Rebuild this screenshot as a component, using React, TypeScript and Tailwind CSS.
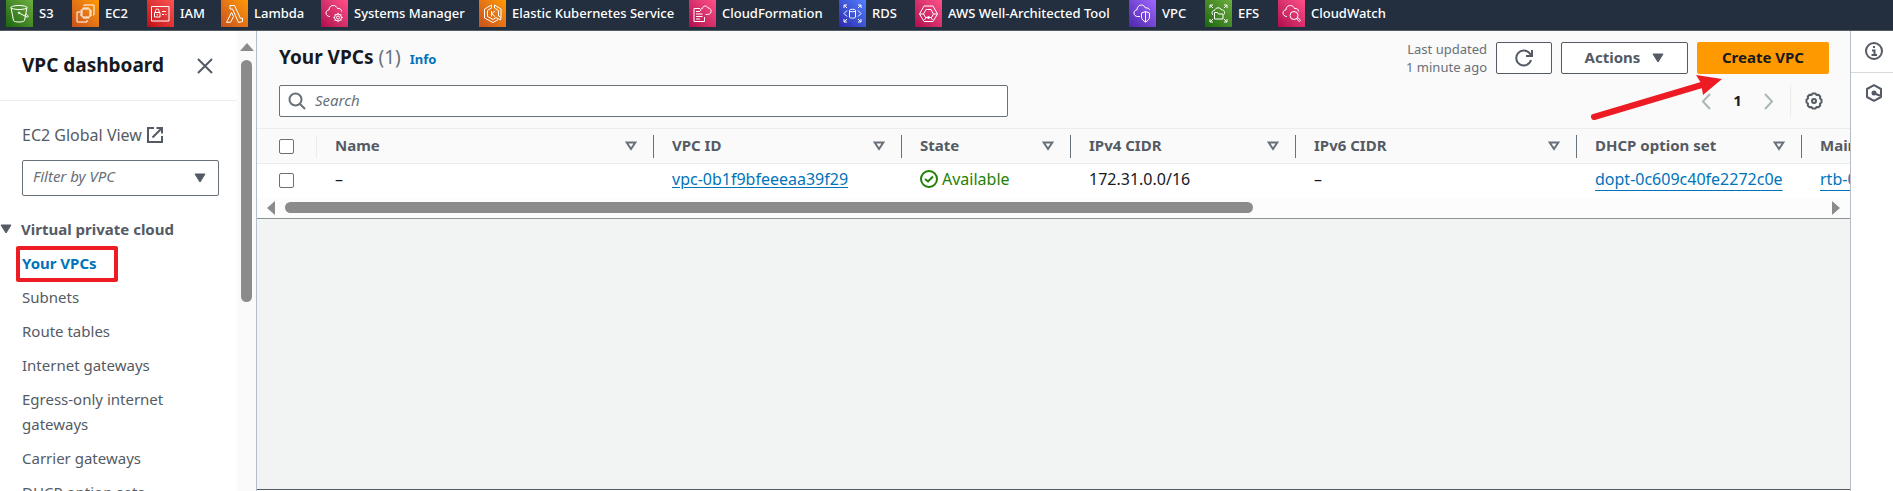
import React from "react";

type Service = { name: string; width: string; tile: string; glyph: React.ReactNode };

const cloud = "M9 16.5C6.500 16.500 5 15 5 13C5 11 6.500 10 8 9.800C8 7 10 5.500 12.300 5.500C14.500 5.500 15.800 6.800 16.500 8.500C19 8 20.500 9.500 20.700 11.500";

const services: Service[] = [
  {
    name: "S3",
    width: "w-[66px]",
    tile: "from-[#1b660f] to-[#6cae3e]",
    glyph: (
      <>
        <ellipse cx="13" cy="7.500" rx="8" ry="2" />
        <path d="M5 7.500L7.500 20.500C8 22.500 18 22.500 18.500 20.500L21 7.500" />
        <path d="M13 13L21 17C23 17.500 22.500 15.500 20 14" />
        <circle cx="13" cy="12.800" r="0.700" fill="white" />
      </>
    ),
  },
  {
    name: "EC2",
    width: "w-[75px]",
    tile: "from-[#c8511b] to-[#ff9900]",
    glyph: (
      <>
        <rect x="10" y="9" width="8" height="8" />
        <path d="M12 7V9M14 7V9M16 7V9M12 17V19M14 17V19M16 17V19M8 11H10M8 13H10M8 15H10M18 11H20M18 13H20M18 15H20" />
        <path d="M12 6V5H22V15H21M8 12H5V22H15V20" />
      </>
    ),
  },
  {
    name: "IAM",
    width: "w-[74px]",
    tile: "from-[#bd0816] to-[#ff5252]",
    glyph: (
      <>
        <rect x="4.500" y="6.500" width="17.500" height="14.500" />
        <rect x="7.500" y="12.500" width="5.500" height="4.500" />
        <path d="M8.500 12.500V10.500C8.500 8.500 12 8.500 12 10.500V12.500M10.300 14V15.500M15 11.500H19M15 14.500H17M18.500 14.500H19.500" />
      </>
    ),
  },
  {
    name: "Lambda",
    width: "w-[100px]",
    tile: "from-[#c8511b] to-[#ff9900]",
    glyph: <path d="M9 5.500H13.500L19.500 18.500L21.500 18V21.500L17.500 22.500L11.500 9H9ZM10.500 12.500L12.500 16.500L9.500 22.300H5.500Z" />,
  },
  {
    name: "Systems Manager",
    width: "w-[158px]",
    tile: "from-[#b0084d] to-[#ff4f8b]",
    glyph: (
      <>
        <path d={cloud} />
        <circle cx="17" cy="17.500" r="1.500" />
        <path d="M17 12.800V14.200M17 20.800V22.200M12.300 17.500H13.700M20.300 17.500H21.700M13.700 14.200L14.700 15.200M19.300 19.800L20.300 20.800M13.700 20.800L14.700 19.800M19.300 15.200L20.300 14.200" />
        <circle cx="17" cy="17.500" r="3.500" />
      </>
    ),
  },
  {
    name: "Elastic Kubernetes Service",
    width: "w-[210px]",
    tile: "from-[#c8511b] to-[#ff9900]",
    glyph: (
      <>
        <path d="M12.500 5L5.500 9V18L14 22.500L19 19.500M15.500 5L22 9V17.500" />
        <path d="M12.500 8L8.500 10.500V16.500L14 19.500L17 17.500L21.500 20L22 17.500L19.500 16V10.500L15.500 8M12.500 5V8M15.500 5V8" />
        <path d="M12.500 11V16.500M16 11L12.800 13.800L16 16.500" />
      </>
    ),
  },
  {
    name: "CloudFormation",
    width: "w-[150px]",
    tile: "from-[#b0084d] to-[#ff4f8b]",
    glyph: (
      <>
        <path d="M11 8.500H5V21.500H15.500V17M7 11.500H11M7 14H13.500M7 16.500H13.500M7 19H11" />
        <path d="M11.500 11C11.500 8.500 12.500 8.500 13.500 8.500C13.500 5.500 18 5 19 8C21.500 8 22.500 10 22 12C21.500 14 20 14.500 16.500 14.500" />
      </>
    ),
  },
  {
    name: "RDS",
    width: "w-[76px]",
    tile: "from-[#2e27ad] to-[#527fff]",
    glyph: (
      <>
        <ellipse cx="13.500" cy="10.500" rx="3" ry="1.300" />
        <path d="M10.500 10.500V17C10.500 18.500 16.500 18.500 16.500 17V10.500" />
        <path d="M8 10.500L5 13.500L8 16.500M19 10.500L22 13.500L19 16.500" />
        <path d="M8 8L5 5M5 8V5H8M19 8L22 5M19 5H22V8M8 19L5 22M5 19V22H8M19 19L22 22M22 19V22H19" />
      </>
    ),
  },
  {
    name: "AWS Well-Architected Tool",
    width: "w-[214px]",
    tile: "from-[#b0084d] to-[#ff4f8b]",
    glyph: (
      <>
        <path d="M9 6H18L22.500 14L18 21.500H9L4.500 14Z" />
        <path d="M11 9.500H16L18.500 14L16.500 17.500H10.500L8.500 14ZM4.500 14H8.500M18.500 14H22.500M11 17.500L9.500 20M16 17.500L17.500 20" />
        <circle cx="13.500" cy="17.500" r="1" fill="white" />
      </>
    ),
  },
  {
    name: "VPC",
    width: "w-[76px]",
    tile: "from-[#4d27aa] to-[#a166ff]",
    glyph: (
      <>
        <path d="M11 16.500H8.500C6.500 16.500 5 15 5 13C5 11 6.500 10 8 9.800C8 7 10 5 12.300 5C14.500 5 15.800 6.500 16.500 8C18.500 7.500 20.500 8.500 20.500 10" />
        <path d="M16.500 11.500L20.500 13V17C20.500 19 18.500 21 16.500 22C14.500 21 12.500 19 12.500 17V13ZM16.500 11.500V22" />
      </>
    ),
  },
  {
    name: "EFS",
    width: "w-[73px]",
    tile: "from-[#1b660f] to-[#6cae3e]",
    glyph: (
      <>
        <path d="M8 15C6 12.500 7.500 10.500 9.500 10.500C10.500 7 15.500 7 16.500 10C19 9.500 20.500 12 19 14.500" />
        <path d="M9.500 19V12.500H12.500L13.500 14H18V19Z" />
        <path d="M8 8L5 5M5 8V5H8M19 8L22 5M19 5H22V8M8 19L5 22M5 19V22H8M19 19L22 22M22 19V22H19" />
      </>
    ),
  },
  {
    name: "CloudWatch",
    width: "w-[130px]",
    tile: "from-[#b0084d] to-[#ff4f8b]",
    glyph: (
      <>
        <path d={cloud} />
        <circle cx="16" cy="15.500" r="4" />
        <path d="M18.500 18.500L20 17.500L22.500 20.500L21.300 21.700Z" />
      </>
    ),
  },
];

function ServiceBar() {
  return (
    <nav aria-label="Favorites" className="flex h-[31px] shrink-0 overflow-hidden border-b border-[#545b64] bg-[#232f3e] pl-[6px]">
      {services.map((s) => (
        <a key={s.name} href="#" className={`flex shrink-0 items-start gap-[6px] whitespace-nowrap ${s.width}`}>
          <span className={`size-[27px] shrink-0 bg-linear-to-tr ${s.tile}`}>
            <svg viewBox="0 0 27 27" className="size-full" fill="none" stroke="white" strokeWidth="1" strokeLinejoin="round" aria-hidden="true">
              {s.glyph}
            </svg>
          </span>
          <span className="text-[13px] font-medium leading-[26px] text-white">{s.name}</span>
        </a>
      ))}
    </nav>
  );
}

function Caret({ className = "" }: { className?: string }) {
  return (
    <svg viewBox="0 0 12 10" className={`h-[10px] w-[12px] shrink-0 ${className}`} aria-hidden="true">
      <path d="M1 1H11L6 9Z" fill="#545b64" stroke="#545b64" strokeLinejoin="round" />
    </svg>
  );
}

const links = ["Your VPCs", "Subnets", "Route tables", "Internet gateways", "Egress-only internet gateways", "Carrier gateways", "DHCP option sets"];

function Sidebar() {
  return (
    <aside className="flex w-[257px] shrink-0 overflow-hidden border-r border-[#b6bec9] bg-white">
      <div className="min-w-0 flex-1 text-[15px] text-[#545b64]">
        <div className="flex h-[70px] items-center justify-between border-b border-[#eaeded] pl-[22px] pr-[24px]">
          <h2 className="text-[19px] font-bold text-[#16191f]">VPC dashboard</h2>
          <button type="button" aria-label="Close navigation" className="size-4">
            <svg viewBox="0 0 16 16" className="size-4" stroke="#545b64" strokeWidth="2" aria-hidden="true">
              <path d="M1 1L15 15M15 1L1 15" />
            </svg>
          </button>
        </div>
        <a href="#" className="mt-[22px] flex h-6 items-center gap-[5px] pl-[22px] text-base">
          EC2 Global View
          <svg viewBox="0 0 16 16" className="size-4" fill="none" stroke="#545b64" strokeWidth="2" aria-hidden="true">
            <path d="M7 1H1V15H15V9M9.500 1H15V6.500M15 1L5.500 10.500" />
          </svg>
        </a>
        <div className="relative mt-[13px] ml-[22px] mr-[18px]">
          <select aria-label="Filter by VPC" className="h-9 w-full appearance-none rounded-[2px] border border-[#687078] bg-white pl-[10px] pb-[3px] text-[15px] italic text-[#687078]">
            <option>Filter by VPC</option>
          </select>
          <Caret className="pointer-events-none absolute right-[13px] top-[13px]" />
        </div>
        <button type="button" className="mt-[21px] flex h-6 items-center gap-[9px] font-bold">
          <Caret />
          Virtual private cloud
        </button>
        <ul className="mt-[10px] flex flex-col gap-[9px] pl-[22px] pr-[40px] leading-[25px]">
          {links.map((l, i) => (
            <li key={l} className="relative">
              <a href="#" className={i === 0 ? "font-bold text-[#0073bb]" : ""}>{l}</a>
              {i === 0 && <span className="pointer-events-none absolute -left-[6px] -top-[5px] h-9 w-[102px] rounded-[2px] border-4 border-[#ed1c24]" />}
            </li>
          ))}
        </ul>
      </div>
      <div className="flex w-[19px] shrink-0 flex-col items-center bg-[#fafafa] pt-[12px]" aria-hidden="true">
        <svg viewBox="0 0 14 8" className="h-2 w-[14px] shrink-0"><path d="M7 0L14 8H0Z" fill="#8b8b8b" /></svg>
        <div className="mt-[9px] h-[242px] w-[11px] shrink-0 rounded-full bg-[#8b8b8b]" />
      </div>
    </aside>
  );
}

function Box({ label }: { label: string }) {
  return <input type="checkbox" aria-label={label} className="block size-[15px] appearance-none rounded-[2px] border border-[#687078] bg-white" />;
}

const columns = [
  { name: "Name", width: "w-[337px]" },
  { name: "VPC ID", width: "w-[248px]" },
  { name: "State", width: "w-[169px]" },
  { name: "IPv4 CIDR", width: "w-[225px]" },
  { name: "IPv6 CIDR", width: "w-[281px]" },
  { name: "DHCP option set", width: "w-[225px]" },
  { name: "Main route table", width: "w-[225px]" },
];

const linkStyle = "text-[#0073bb] underline underline-offset-2";
const dottedLinkStyle = "text-[#0073bb] underline underline-offset-[5px]";

function VpcTable() {
  return (
    <div className="overflow-hidden">
      <table className="w-[1770px] table-fixed border-collapse text-left text-base leading-6 text-[#16191f]">
        <thead>
          <tr className="h-[35px] border-y border-[#eaeded] bg-[#fafafa] text-[15px] text-[#545b64]">
            <th className="w-[60px] p-0">
              <div className="flex h-[23px] items-center border-r border-[#eaeded] pl-[22px]"><Box label="Select all" /></div>
            </th>
            {columns.map((c) => (
              <th key={c.name} className={`p-0 ${c.width}`}>
                <div className="flex h-[23px] items-center justify-between whitespace-nowrap border-r border-[#687078] pl-[18px] pr-4 font-bold">
                  <span className="pb-[3px]">{c.name}</span>
                  <svg viewBox="0 0 12 10" className="h-[10px] w-[12px] shrink-0" fill="none" stroke="#687078" strokeWidth="2" aria-hidden="true">
                    <path d="M1.700 1.500H10.300L6 8Z" />
                  </svg>
                </div>
              </th>
            ))}
          </tr>
        </thead>
        <tbody>
          <tr className="h-[34px] bg-white [&>td]:whitespace-nowrap [&>td]:p-0 [&>td]:pl-[18px] [&>td]:pb-[3px]">
            <th className="p-0 pl-[22px]"><Box label="Select VPC" /></th>
            <td>–</td>
            <td><a href="#" className={linkStyle}>vpc-0b1f9bfeeeaa39f29</a></td>
            <td>
              <span className="flex items-center gap-[4px] text-[#1d8102]">
                <svg viewBox="0 0 18 18" className="size-[18px]" fill="none" stroke="#1d8102" strokeWidth="2" aria-hidden="true">
                  <circle cx="9" cy="9" r="8" /><path d="M5 9L8 11.500L13 6.500" />
                </svg>
                Available
              </span>
            </td>
            <td>172.31.0.0/16</td>
            <td>–</td>
            <td><a href="#" className={dottedLinkStyle}>dopt-0c609c40fe2272c0e</a></td>
            <td><a href="#" className={dottedLinkStyle}>rtb-0a7d2c41</a></td>
          </tr>
        </tbody>
      </table>
    </div>
  );
}

function Toolbar() {
  const button = "flex h-8 items-center justify-center rounded-[2px] border border-[#545b64] bg-white text-[15px] font-bold text-[#545b64]";
  return (
    <header className="relative h-[97px] pl-[22px] pr-[21px]">
      <div className="flex h-[54px] items-center">
        <h1 className="pb-[2px] text-[19px] font-bold text-[#16191f]">
          Your VPCs <span className="font-normal text-[#687078]">(1)</span>
        </h1>
        <a href="#" className="ml-[9px] pt-[3px] text-[13px] font-bold text-[#0073bb]">Info</a>
        <p className="ml-auto mr-[9px] text-right text-[13px] leading-[18px] text-[#687078]">Last updated<br />1 minute ago</p>
        <button type="button" aria-label="Refresh" className={`${button} w-14`}>
          <svg viewBox="0 0 18 18" className="size-[18px]" fill="none" stroke="#545b64" strokeWidth="2" aria-hidden="true">
            <path d="M16 11A7.500 7.500 0 1 1 14.800 4.500L17 7M17 1V7H11" />
          </svg>
        </button>
        <button type="button" className={`${button} ml-[9px] w-[127px] gap-[12px]`}><span className="pb-[2px]">Actions</span><Caret /></button>
        <button type="button" className="ml-[9px] h-8 w-[132px] rounded-[2px] bg-[#ff9900] pb-[2px] text-[15px] font-bold text-[#16191f]">Create VPC</button>
      </div>
      <div className="flex h-8 items-center">
        <label className="flex h-8 w-[729px] items-center gap-[9px] rounded-[2px] border border-[#687078] bg-white pl-2">
          <svg viewBox="0 0 18 18" className="size-[18px] shrink-0" fill="none" stroke="#687078" strokeWidth="2" aria-hidden="true">
            <circle cx="7.500" cy="7.500" r="6" /><path d="M12 12L17 17" />
          </svg>
          <input type="text" aria-label="Search" placeholder="Search" className="h-full min-w-0 flex-1 pb-[2px] text-[15px] italic outline-none placeholder:text-[#687078]" />
        </label>
        <div className="ml-auto flex h-8 items-center pr-[6px]">
          <button type="button" aria-label="Previous page">
            <svg viewBox="0 0 10 17" className="h-[17px] w-[10px]" fill="none" stroke="#aab7b8" strokeWidth="2" aria-hidden="true"><path d="M9 1L2 8.500L9 16" /></svg>
          </button>
          <span className="w-[53px] pb-[2px] text-center text-[15px] font-bold text-[#16191f]">1</span>
          <button type="button" aria-label="Next page">
            <svg viewBox="0 0 10 17" className="h-[17px] w-[10px]" fill="none" stroke="#aab7b8" strokeWidth="2" aria-hidden="true"><path d="M1 1L8 8.500L1 16" /></svg>
          </button>
          <button type="button" aria-label="Preferences" className="ml-[16px] flex h-8 items-center border-l border-[#eaeded] pl-[14px]">
            <svg viewBox="0 0 18 18" className="size-[18px]" fill="none" stroke="#545b64" strokeWidth="2" strokeLinejoin="round" aria-hidden="true">
              <path d="M7.500 1.500H10.500L11.500 3L13.500 2.800L15.200 4.500L15 6.500L16.500 7.500V10.500L15 11.500L15.200 13.500L13.500 15.200L11.500 15L10.500 16.500H7.500L6.500 15L4.500 15.200L2.800 13.500L3 11.500L1.500 10.500V7.500L3 6.500L2.800 4.500L4.500 2.800L6.500 3Z" />
              <circle cx="9" cy="9" r="2" />
            </svg>
          </button>
        </div>
      </div>
      <svg viewBox="0 0 134 48" className="pointer-events-none absolute right-[126px] top-[42px] h-12 w-[134px]" aria-hidden="true">
        <path d="M4 44L115 11" stroke="#ed1c24" strokeWidth="6" strokeLinecap="round" />
        <path d="M132 6L106 2L111 10L113 22Z" fill="#ed1c24" />
      </svg>
    </header>
  );
}

export default function App() {
  return (
    <div className="flex h-screen flex-col overflow-hidden font-['Noto_Sans',sans-serif]">
      <ServiceBar />
      <div className="flex min-h-0 flex-1">
        <Sidebar />
        <main className="flex min-w-0 flex-1 flex-col bg-[#f2f3f3]">
          <section className="border-b border-[#879596] bg-[#fafafa]">
            <Toolbar />
            <VpcTable />
            <div className="flex h-[20px] items-center bg-[#fcfcfc] px-[10px]" aria-hidden="true">
              <svg viewBox="0 0 8 14" className="h-[14px] w-2 shrink-0"><path d="M8 0V14L0 7Z" fill="#8b8b8b" /></svg>
              <div className="mx-[10px] flex-1"><div className="h-[11px] w-[63%] rounded-full bg-[#8b8b8b]" /></div>
              <svg viewBox="0 0 8 14" className="h-[14px] w-2 shrink-0"><path d="M0 0V14L8 7Z" fill="#8b8b8b" /></svg>
            </div>
          </section>
          <div className="mt-auto h-[2px] border-t border-[#545b64] bg-white" />
        </main>
        <aside className="w-[43px] shrink-0 border-l border-[#b6bec9] bg-white">
          <button type="button" aria-label="Info panel" className="flex h-[42px] w-full items-center justify-center border-b border-[#d5dbdb] pl-1 pb-[2px]">
            <svg viewBox="0 0 18 18" className="size-[18px]" fill="none" stroke="#545b64" strokeWidth="2" aria-hidden="true">
              <circle cx="9" cy="9" r="8" /><path d="M7 8.500H9.500V13M6.500 13H12M8 5H10" />
            </svg>
          </button>
          <button type="button" aria-label="Diagnostics" className="flex h-[42px] w-full items-center justify-center pl-1 pb-[2px]">
            <svg viewBox="0 0 18 18" className="size-[18px]" fill="none" stroke="#545b64" strokeWidth="2" strokeLinejoin="round" aria-hidden="true">
              <path d="M9 1.200L16 5V13L9 16.800L2 13V5ZM9.500 9.500L16 12" /><circle cx="9" cy="9" r="1.500" fill="#545b64" />
            </svg>
          </button>
        </aside>
      </div>
    </div>
  );
}
